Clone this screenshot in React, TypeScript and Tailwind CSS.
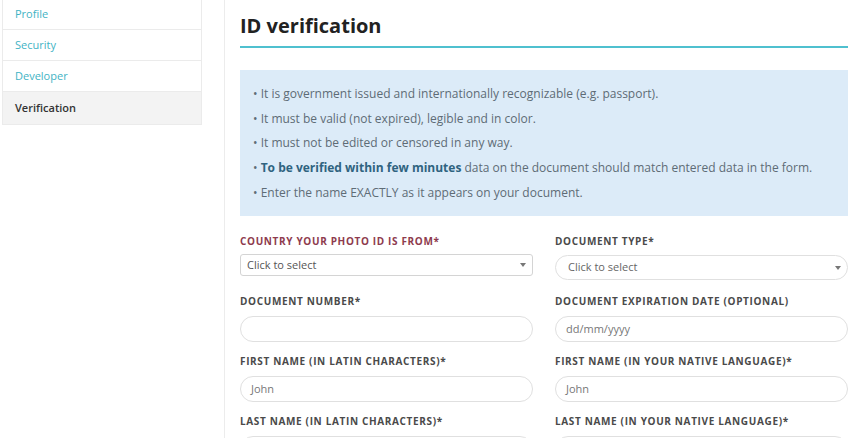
import React from "react";

const font = { fontFamily: '"Open Sans", "Noto Sans", sans-serif' };

function Label({ children, red }: { children: React.ReactNode; red?: boolean }) {
  return (
    <div
      className={`text-[10px] font-bold tracking-[0.065em] uppercase leading-[14px] ${red ? "text-[#8e3b4e]" : "text-[#4a4a4a]"}`}
    >
      {children}
    </div>
  );
}

function Caret() {
  return (
    <svg width="6" height="4" viewBox="0 0 6 4" className="shrink-0">
      <path d="M0 0 L6 0 L3 4 Z" fill="#777" />
    </svg>
  );
}

export default function App() {
  const bullets: React.ReactNode[] = [
    <>It is government issued and internationally recognizable (e.g. passport).</>,
    <>It must be valid (not expired), legible and in color.</>,
    <>It must not be edited or censored in any way.</>,
    <>
      <span className="font-bold text-[#2f6380]">To be verified within few minutes</span> data on the document should
      match entered data in the form.
    </>,
    <>Enter the name EXACTLY as it appears on your document.</>,
  ];
  return (
    <div style={font} className="w-[862px] h-[438px] bg-white overflow-hidden flex">
      <div className="w-[224px] shrink-0 pl-[2px] pr-[22px]">
        <div className="border-x border-b border-[#ebebeb] text-[11px]">
          <div className="h-[30px] flex items-center pl-[12px] text-[#3fb3c4] border-b border-[#ebebeb]">Profile</div>
          <div className="h-[31px] flex items-center pl-[12px] text-[#3fb3c4] border-b border-[#ebebeb]">Security</div>
          <div className="h-[31px] flex items-center pl-[12px] text-[#3fb3c4] border-b border-[#ebebeb]">Developer</div>
          <div className="h-[32px] flex items-center pl-[12px] text-[#333] font-semibold bg-[#f3f3f3]">Verification</div>
        </div>
      </div>
      <div className="flex-1 border-l border-[#ececec] pl-[15px] pr-[14px]">
        <div className="pt-[14px] h-[46px]">
          <h1 className="text-[20px] font-bold text-[#222] leading-[24px]">ID verification</h1>
        </div>
        <div className="h-[2px] bg-[#4fc0cf]" />
        <div className="mt-[22px] bg-[#dcebf8] h-[146px] pl-[13px] pt-[12px] text-[12px] text-[#5e6c76]">
          {bullets.map((b, i) => (
            <div key={i} className="h-[24.7px] leading-[24.7px] whitespace-nowrap">
              • {b}
            </div>
          ))}
        </div>
        <div className="mt-[18px] grid grid-cols-[293px_293px] gap-x-[22px] text-[11px]">
          <div className="h-[60px]">
            <Label red>Country your photo ID is from*</Label>
            <div className="mt-[6px] h-[22px] border border-[#d4d4d4] rounded-[3px] flex items-center justify-between pl-[6px] pr-[6px] text-[#555]">
              <span>Click to select</span>
              <Caret />
            </div>
          </div>
          <div className="h-[60px]">
            <Label>Document type*</Label>
            <div className="mt-[7px] h-[25px] border border-[#e0e0e0] rounded-full flex items-center justify-between pl-[12px] pr-[6px] text-[#666]">
              <span>Click to select</span>
              <Caret />
            </div>
          </div>
          <div className="h-[60px]">
            <Label>Document number*</Label>
            <div className="mt-[8px] h-[26px] border border-[#e0e0e0] rounded-full" />
          </div>
          <div className="h-[60px]">
            <Label>Document expiration date (optional)</Label>
            <div className="mt-[8px] h-[26px] border border-[#e0e0e0] rounded-full flex items-center pl-[10px] text-[#777]">
              dd/mm/yyyy
            </div>
          </div>
          <div className="h-[60px]">
            <Label>First name (in Latin characters)*</Label>
            <div className="mt-[8px] h-[26px] border border-[#e0e0e0] rounded-full flex items-center pl-[10px] text-[#777]">
              John
            </div>
          </div>
          <div className="h-[60px]">
            <Label>First name (in your native language)*</Label>
            <div className="mt-[8px] h-[26px] border border-[#e0e0e0] rounded-full flex items-center pl-[10px] text-[#777]">
              John
            </div>
          </div>
          <div className="h-[60px]">
            <Label>Last name (in Latin characters)*</Label>
            <div className="mt-[8px] h-[26px] border border-[#e0e0e0] rounded-full" />
          </div>
          <div className="h-[60px]">
            <Label>Last name (in your native language)*</Label>
            <div className="mt-[8px] h-[26px] border border-[#e0e0e0] rounded-full" />
          </div>
        </div>
      </div>
    </div>
  );
}
